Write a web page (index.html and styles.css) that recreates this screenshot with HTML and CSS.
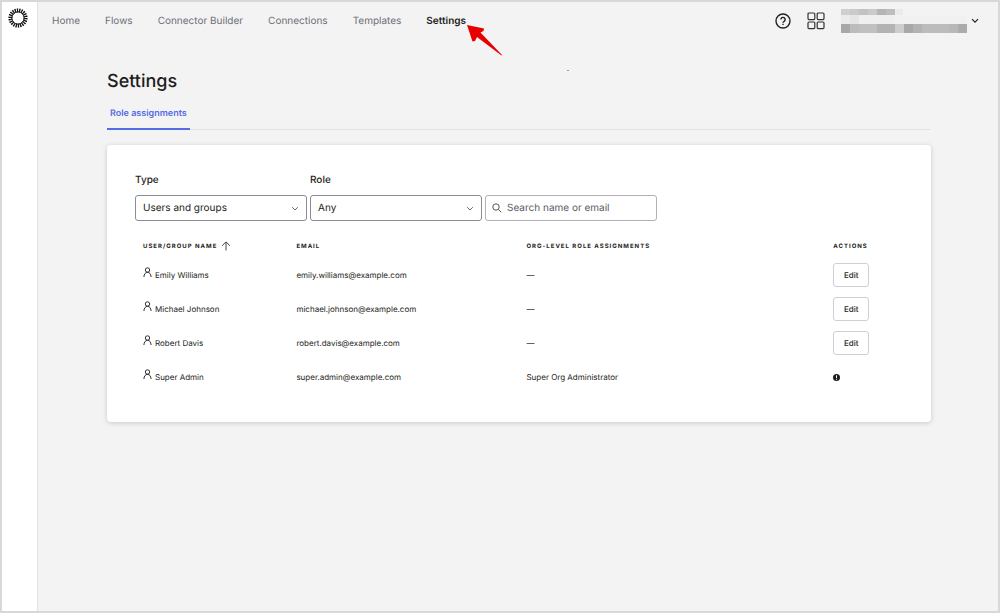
FILE: index.html
```html
<!DOCTYPE html>
<html lang="en">
<head>
  <meta charset="utf-8">
  <title>Settings</title>
  <link rel="stylesheet" href="styles.css">
</head>
<body>
  <div class="app">
    <aside class="sidebar">
      <a href="#" class="logo" aria-label="Home page">
        <svg width="20" height="20" viewBox="0 0 20 20">
          <circle cx="10" cy="10" r="7.6" fill="none" stroke="#111" stroke-width="4" pathLength="88" stroke-dasharray="2.3 1.7"/>
          <circle cx="10" cy="10" r="6.2" fill="none" stroke="#111" stroke-width="1"/>
        </svg>
      </a>
    </aside>

    <div class="page">
      <header class="topbar">
        <nav class="nav">
          <a href="#">Home</a>
          <a href="#">Flows</a>
          <a href="#">Connector Builder</a>
          <a href="#">Connections</a>
          <a href="#">Templates</a>
          <a href="#" class="active">Settings
            <svg class="pointer" width="38" height="34" viewBox="0 0 38 34">
              <path d="M1 1 L18 4.500 L17.500 7 L14.500 8.500 L36 31 L35.500 31.500 L11 13 L9 17 L6.500 17.500 Z" fill="#e60000"/>
            </svg>
          </a>
        </nav>
        <div class="tools">
          <button class="icon-btn" aria-label="Help">
            <svg width="16" height="16" viewBox="0 0 16 16" fill="none" stroke="#222" stroke-width="1.4">
              <circle cx="8" cy="8" r="7"/>
              <path d="M5.9 6.5a2.1 2.1 0 1 1 3.2 1.8c-.8.4-1.1.7-1.1 1.5"/>
              <path d="M8 10.7v1.4"/>
            </svg>
          </button>
          <button class="icon-btn" aria-label="Apps">
            <svg width="18" height="18" viewBox="0 0 18 18" fill="none" stroke="#333" stroke-width="1.2">
              <rect x="1" y="1" width="6.8" height="6.6" rx="1"/>
              <rect x="10.2" y="1" width="6.8" height="6.6" rx="1"/>
              <rect x="1" y="10" width="6.8" height="6.6" rx="1"/>
              <rect x="10.2" y="10" width="6.8" height="6.6" rx="1"/>
            </svg>
          </button>
          <button class="account" aria-label="Account">
            <svg width="127" height="24" viewBox="0 0 127 24" shape-rendering="crispEdges">
              <path fill="#cfcfcf" d="M0 0h9v6H0z"/>
              <path fill="#cacaca" d="M9 0h9v6H9zM27 0h9v6h-9z"/>
              <path fill="#c2c2c2" d="M18 0h9v6h-9z"/>
              <path fill="#b5b5b5" d="M36 0h9v6h-9z"/>
              <path fill="#bdbdbd" d="M45 0h9v6h-9z"/>
              <path fill="#ebebeb" d="M54 0h8v6h-8zM0 6h9v9H0z"/>
              <path fill="#e5e5e5" d="M9 6h9v9H9z"/>
              <path fill="#efefef" d="M18 6h36v9H18z"/>
              <path fill="#f1f1f1" d="M54 6h72v9H54z"/>
              <path fill="#a8a8a8" d="M0 15h9v9H0zM63 15h9v9h-9z"/>
              <path fill="#bcbcbc" d="M9 15h9v9H9zM81 15h27v9H81z"/>
              <path fill="#c0c0c0" d="M18 15h18v9H18z"/>
              <path fill="#b3b3b3" d="M36 15h18v9H36zM72 15h9v9h-9z"/>
              <path fill="#cdcdcd" d="M54 15h9v9h-9z"/>
              <path fill="#b8b8b8" d="M108 15h9v9h-9z"/>
              <path fill="#acacac" d="M117 15h9v9h-9z"/>
            </svg>
            <svg width="8" height="6" viewBox="0 0 8 6" fill="none" stroke="#222" stroke-width="1.2">
              <path d="M1 1.2l3 3 3-3"/>
            </svg>
          </button>
        </div>
      </header>

      <main class="content">
        <span class="speck"></span>
        <h1>Settings</h1>
        <div class="tabs">
          <a href="#" class="tab">Role assignments</a>
        </div>

        <section class="card">
          <form class="filters">
            <div class="field">
              <label for="type">Type</label>
              <div class="control">
                <select id="type">
                  <option>Users and groups</option>
                </select>
                <svg class="chevron" width="8" height="6" viewBox="0 0 8 6" fill="none" stroke="#666"><path d="M1.2 1.2L4 4l2.800-2.800"/></svg>
              </div>
            </div>
            <div class="field">
              <label for="role">Role</label>
              <div class="control">
                <select id="role">
                  <option>Any</option>
                </select>
                <svg class="chevron" width="8" height="6" viewBox="0 0 8 6" fill="none" stroke="#666"><path d="M1.2 1.2L4 4l2.800-2.800"/></svg>
              </div>
            </div>
            <div class="field">
              <div class="control">
                <svg class="lens" width="10" height="10" viewBox="0 0 10 10" fill="none" stroke="#555"><circle cx="4" cy="4" r="3.200"/><path d="M6.400 6.400L9.200 9.200"/></svg>
                <input type="text" class="search" placeholder="Search name or email" aria-label="Search name or email">
              </div>
            </div>
          </form>

          <table class="users">
            <thead>
              <tr>
                <th class="col-name">User/group name
                  <svg class="sort" width="10" height="10" viewBox="0 0 10 10" fill="none" stroke="#444"><path d="M5 9.500V1M1.200 4.600L5 .9l3.800 3.700"/></svg>
                </th>
                <th class="col-email">Email</th>
                <th class="col-roles">Org-level role assignments</th>
                <th class="col-actions">Actions</th>
              </tr>
            </thead>
            <tbody>
              <tr>
                <td><svg class="person" width="9" height="11" viewBox="0 0 9 11" fill="none" stroke="#333"><circle cx="4.500" cy="3" r="2.200"/><path d="M.9 10C1.100 7.200 2.300 5.300 4.500 5.300S7.900 7.200 8.100 10"/></svg>Emily Williams</td>
                <td>emily.williams@example.com</td>
                <td>—</td>
                <td><button class="btn">Edit</button></td>
              </tr>
              <tr>
                <td><svg class="person" width="9" height="11" viewBox="0 0 9 11" fill="none" stroke="#333"><circle cx="4.500" cy="3" r="2.200"/><path d="M.9 10C1.100 7.200 2.300 5.300 4.500 5.300S7.900 7.200 8.100 10"/></svg>Michael Johnson</td>
                <td>michael.johnson@example.com</td>
                <td>—</td>
                <td><button class="btn">Edit</button></td>
              </tr>
              <tr>
                <td><svg class="person" width="9" height="11" viewBox="0 0 9 11" fill="none" stroke="#333"><circle cx="4.500" cy="3" r="2.200"/><path d="M.9 10C1.100 7.200 2.300 5.300 4.500 5.300S7.900 7.200 8.100 10"/></svg>Robert Davis</td>
                <td>robert.davis@example.com</td>
                <td>—</td>
                <td><button class="btn">Edit</button></td>
              </tr>
              <tr>
                <td><svg class="person" width="9" height="11" viewBox="0 0 9 11" fill="none" stroke="#333"><circle cx="4.500" cy="3" r="2.200"/><path d="M.9 10C1.100 7.200 2.300 5.300 4.500 5.300S7.900 7.200 8.100 10"/></svg>Super Admin</td>
                <td>super.admin@example.com</td>
                <td>Super Org Administrator</td>
                <td><svg class="info" width="7" height="7" viewBox="0 0 7 7"><circle cx="3.500" cy="3.500" r="3.500" fill="#1d1d21"/><path d="M3.500 1.300v2.700M3.500 4.800v1" stroke="#fff"/></svg></td>
              </tr>
            </tbody>
          </table>
        </section>
      </main>
    </div>
  </div>
</body>
</html>
```
FILE: styles.css
```css
* { box-sizing: border-box; }
body { margin: 0; font-family: Inter, "Liberation Sans", sans-serif; font-size: 8px; line-height: 12px; color: #1d1d21; text-rendering: geometricPrecision; }
a { text-decoration: none; color: inherit; }
button, input, select { font-family: inherit; color: inherit; text-rendering: inherit; }
svg { flex: none; }

.app { display: flex; min-height: 100vh; border: 2px solid #d8d8d8; background: #f3f3f3; }
.sidebar { width: 36px; flex: none; background: #fff; border-right: 1px solid #e2e2e2; }
.logo { display: flex; justify-content: center; padding-top: 6px; padding-right: 3px; }
.page { flex: 1; min-width: 0; }

.topbar { display: flex; justify-content: space-between; align-items: center; height: 37px; padding: 0 19px 0 14px; }
.nav { display: flex; gap: 25px; font-size: 10px; color: #6e6e78; }
.nav .active { position: relative; color: #1d1d21; font-weight: 600; }
.pointer { position: absolute; left: 40px; top: 9px; }
.tools { display: flex; align-items: center; }
.icon-btn, .account { display: flex; align-items: center; border: none; background: none; padding: 0; cursor: pointer; }
.icon-btn { margin-right: 16px; }
.account { gap: 3px; }

.content { position: relative; padding: 30px 67px 28px 69px; }
.speck { position: absolute; left: 529px; top: 31px; width: 2px; height: 1px; background: #999; }
h1 { margin: 0; font-size: 18px; line-height: 26px; font-weight: 500; }
.tabs { display: flex; margin-top: 2px; border-bottom: 1px solid #e2e2e2; }
.tab { padding: 10px 3px 7px; margin-bottom: -1px; border-bottom: 2px solid #546be7; color: #546be7; font-size: 9px; line-height: 14px; font-weight: 600; }

.card { margin-top: 15px; padding: 28px 29px 28px 28px; background: #fff; border-radius: 4px; box-shadow: 0 1px 5px rgba(0, 0, 0, 0.18); }
.filters { display: flex; align-items: flex-end; gap: 3px; }
.field { width: 172px; }
.field label { display: block; margin-bottom: 8px; font-size: 10px; line-height: 14px; font-weight: 500; }
.control { position: relative; }
.control select, .search { display: block; width: 100%; height: 26px; padding: 0 7px; border: 1px solid #8c8c96; border-radius: 3px; background: #fff; font-size: 10px; appearance: none; }
.control .search { padding-left: 21px; border-color: #b0b0b6; }
.search::placeholder { color: #5c5c64; opacity: 1; }
.chevron { position: absolute; right: 8px; top: 11px; }
.lens { position: absolute; left: 7px; top: 8px; }

.users { width: 100%; margin-top: 15px; border-collapse: collapse; table-layout: fixed; }
.users th { height: 22px; padding: 0 8px; text-align: left; font-size: 6px; font-weight: 700; letter-spacing: 1px; text-transform: uppercase; white-space: nowrap; }
.users td { height: 34px; padding: 0 8px; white-space: nowrap; }
.col-name { width: 20%; }
.col-email { width: 30%; }
.col-roles { width: 40%; }
.col-actions { width: 10%; }
.sort { vertical-align: middle; margin-left: 1px; }
.person { margin: -4px 3px 0 0; vertical-align: baseline; }
.info { display: block; }
.btn { display: block; width: 36px; height: 24px; padding: 0; border: 1px solid #d0d0d4; border-radius: 3px; background: #fff; font-size: 8px; font-weight: 500; cursor: pointer; }
```
